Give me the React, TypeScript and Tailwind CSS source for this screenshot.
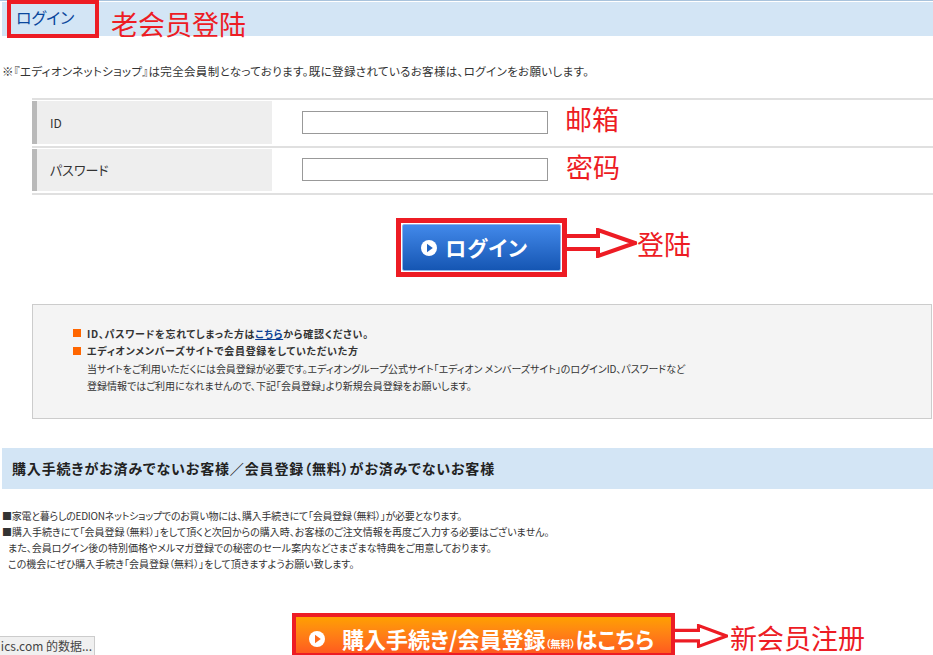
import React from 'react';

const jp = { fontFamily: '"Noto Sans CJK JP", sans-serif' };
const zh = { fontFamily: '"Noto Sans CJK SC", sans-serif', fontFeatureSettings: 'normal' };

const PlayIcon = ({ color }: { color: string }) => (
  <svg width="16" height="16" viewBox="0 0 16 16" className="shrink-0">
    <circle cx="8" cy="8" r="8" fill="#fff" />
    <path d="M6 3.8 L11.8 8 L6 12.2 Z" fill={color} />
  </svg>
);

const Arrow = ({ w, h, className }: { w: number; h: number; className?: string }) => (
  <svg width={w} height={h} viewBox="0 0 70 30" preserveAspectRatio="none" className={className}>
    <path d="M0 8 H31 V2 L68 15 L31 28 V21 H0" fill="#fff" stroke="#ed1c24" strokeWidth="4" />
  </svg>
);

const App = () => {
  return (
    <div className="relative h-[655px] w-[933px] overflow-hidden bg-white text-[#333] [font-feature-settings:'palt']" style={jp}>
      <div className="h-px bg-[#a9c3dc]" />

      {/* Login heading */}
      <div className="ml-[2px] mt-px flex h-[34px] items-center bg-[#d3e5f5]">
        <div className="ml-[5px] flex h-[38px] w-[92px] items-center border-[4px] border-[#ed1c24] pb-[5px] pl-[5px] text-[16px] text-[#0a479d]">
          ログイン
        </div>
        <span className="ml-[12px] mt-[8px] text-[27px] leading-none text-[#ed1c24]" style={zh}>老会员登陆</span>
      </div>

      <p className="ml-[2px] mt-[27px] text-[11.5px] leading-[16px] tracking-[0.35px]">
        ※『エディオンネットショップ』は完全会員制となっております。既に登録されているお客様は、ログインをお願いします。
      </p>

      {/* Form table */}
      <div className="ml-[32px] mt-[19px] border-t-2 border-[#e0e0e0]">
        <div className="flex h-[48px] items-center border-b-2 border-[#e0e0e0] pb-px">
          <div className="flex h-[43px] w-[240px] items-center border-l-[5px] border-[#b9b9b9] bg-[#eeeeee] pl-[13px] text-[12px]">ID</div>
          <input className="ml-[30px] h-[23px] w-[246px] border border-[#999] bg-white" />
          <span className="mb-[8px] ml-[17px] text-[27px] leading-none text-[#ed1c24]" style={zh}>邮箱</span>
        </div>
        <div className="flex h-[47px] items-center border-b-2 border-[#e0e0e0] pb-px">
          <div className="flex h-[42px] w-[240px] items-center border-l-[5px] border-[#b9b9b9] bg-[#eeeeee] pl-[13px] text-[13px]">パスワード</div>
          <input className="mb-px ml-[30px] h-[23px] w-[246px] border border-[#999] bg-white" />
          <span className="mb-[8px] ml-[18px] text-[27px] leading-none text-[#ed1c24]" style={zh}>密码</span>
        </div>
      </div>

      {/* Login button */}
      <div className="ml-[396px] mt-[23px] flex items-center">
        <div className="flex h-[59px] w-[171px] items-center justify-center border-[5px] border-[#ed1c24] bg-white">
          <div className="flex h-[47px] w-[159px] items-center gap-[8px] rounded-[2px] border border-[#8fb4e8] bg-gradient-to-b from-[#4289ea] to-[#1556b3] pl-[18px] text-[21px] font-bold tracking-[1px] text-white">
            <PlayIcon color="#1f63c2" />
            ログイン
          </div>
        </div>
        <Arrow w={70} h={30} className="mb-[10px] shrink-0" />
        <span className="mb-[8px] text-[27px] leading-none text-[#ed1c24]" style={zh}>登陆</span>
      </div>

      {/* Notes */}
      <div className="ml-[32px] mt-[27px] h-[115px] w-[900px] border border-[#cccccc] bg-[#f4f4f4] pl-[40px] pt-[19.5px] text-[10px] leading-[17.6px]">
        <p className="flex items-center gap-[6px] font-bold tracking-[0.7px]">
          <span className="h-[8px] w-[8px] bg-[#ff6600]" />
          <span>ID、パスワードを忘れてしまった方は<a className="text-[#0a3d91] underline">こちら</a>から確認ください。</span>
        </p>
        <p className="flex items-center gap-[6px] font-bold tracking-[0.7px]">
          <span className="h-[8px] w-[8px] bg-[#ff6600]" />
          エディオンメンバーズサイトで会員登録をしていただいた方
        </p>
        <p className="pl-[14px] tracking-[-0.05px]">当サイトをご利用いただくには会員登録が必要です。エディオングループ公式サイト「エディオン メンバーズサイト」のログインID、パスワードなど</p>
        <p className="pl-[14px]">登録情報ではご利用になれませんので、下記「会員登録」より新規会員登録をお願いします。</p>
      </div>

      {/* Register section */}
      <div className="ml-[2px] mt-[29px] flex h-[41px] items-center bg-[#d3e5f5] pl-[10px] text-[14px] font-bold tracking-[0.85px] text-[#222]">
        購入手続きがお済みでないお客様／会員登録（無料）がお済みでないお客様
      </div>

      <div className="ml-[2px] mt-[19px] text-[10px] leading-[16px]">
        <p className="tracking-[-0.25px]">■家電と暮らしのEDIONネットショップでのお買い物には、購入手続きにて「会員登録（無料）」が必要となります。</p>
        <p>■購入手続きにて「会員登録（無料）」をして頂くと次回からの購入時、お客様のご注文情報を再度ご入力する必要はございません。</p>
        <p className="pl-[6px]">また、会員ログイン後の特別価格やメルマガ登録での秘密のセール案内などさまざまな特典をご用意しております。</p>
        <p className="pl-[6px]">この機会にぜひ購入手続き「会員登録（無料）」をして頂きますようお願い致します。</p>
      </div>

      {/* Register button */}
      <div className="ml-[292px] mt-[41px] flex items-center">
        <div className="h-[42px] w-[383px] border-[4px] border-b-[2px] border-[#ed1c24] bg-gradient-to-b from-[#ff9f00] to-[#ff5a1e]">
          <div className="flex h-full items-center pl-[13px] pt-[7px] text-[22px] font-bold text-[#fff]">
            <PlayIcon color="#ff6a1a" />
            <span className="ml-[17px] whitespace-nowrap">購入手続き/会員登録<span className="text-[10px]">（無料）</span>はこちら</span>
          </div>
        </div>
        <Arrow w={53} h={24} className="mt-[4px] shrink-0" />
        <span className="ml-[2px] mt-[6px] text-[27px] leading-none whitespace-nowrap text-[#ed1c24]" style={zh}>新会员注册</span>
      </div>

      {/* Browser status tooltip */}
      <div className="absolute bottom-0 left-0 flex h-[19px] w-[95px] items-center justify-end border-r border-t border-[#cccccc] bg-[#f0f0f0] pr-[2px] text-[12px] whitespace-nowrap text-[#444]" style={zh}>
        ics.com 的数据...
      </div>
    </div>
  );
};

export default App;
